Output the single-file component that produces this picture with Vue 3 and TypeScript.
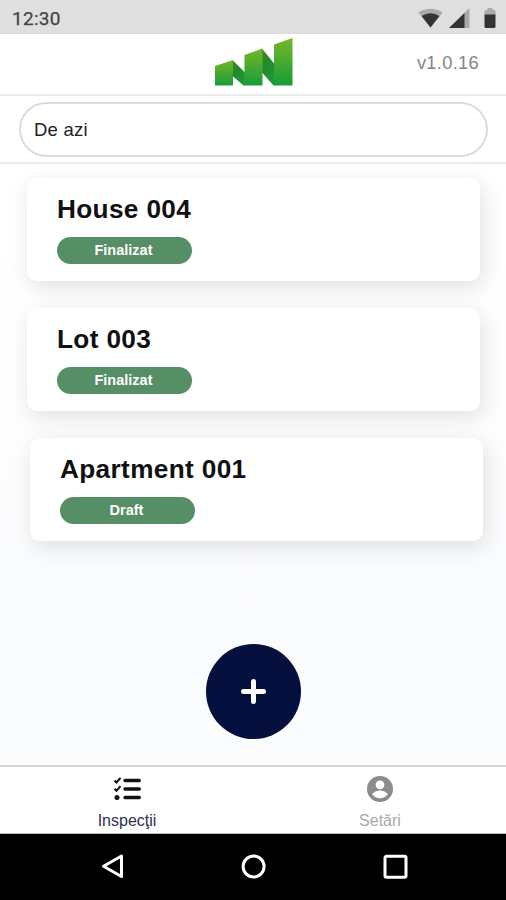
<script setup lang="ts">
interface Inspection {
  title: string
  status: string
  shifted?: boolean
}

const version = 'v1.0.16'
const inspections: Inspection[] = [
  { title: 'House 004', status: 'Finalizat' },
  { title: 'Lot 003', status: 'Finalizat' },
  { title: 'Apartment 001', status: 'Draft', shifted: true },
]
</script>

<template>
  <div class="screen">
    <div class="status-bar">
      <span class="clock">12:30</span>
      <svg class="status-icons" width="80" height="22" viewBox="0 0 80 22">
        <path d="M-0.500 4.500Q11.500 -3 23.500 4.500L11.500 19.500Z" fill="#aaa" />
        <path d="M2.500 8Q11.500 2.500 20.500 8L11.500 19.500Z" fill="#333" />
        <path d="M30 20L50.500 0V20Z" fill="#aaa" />
        <path d="M30 20L45.500 5V20Z" fill="#333" />
        <path d="M65.500 3.500Q65.500 2 67 2H68.500V0H73.500V2H75Q76.500 2 76.500 3.500V7H65.500Z" fill="#aaa" />
        <path d="M65.500 6.500H76.500V18.500Q76.500 20 75 20H67Q65.500 20 65.500 18.500Z" fill="#333" />
      </svg>
    </div>

    <header class="header">
      <svg class="logo" width="78" height="48" viewBox="0 0 78 48">
        <defs>
          <linearGradient id="face" x1="0" y1="0" x2="0" y2="1">
            <stop offset="0" stop-color="#76b62a" />
            <stop offset="1" stop-color="#179d39" />
          </linearGradient>
          <linearGradient id="fold" x1="0" y1="0" x2="0.700" y2="1">
            <stop offset="0" stop-color="#44861d" />
            <stop offset="0.450" stop-color="#25892b" />
            <stop offset="1" stop-color="#189b38" />
          </linearGradient>
        </defs>
        <path d="M17.500 22L30 34.500V47.500H28.500L17.500 38Z" fill="url(#fold)" />
        <path d="M47 10.500L59.500 26V47.500H58.500L47 34.500Z" fill="url(#fold)" />
        <path d="M0 28L18 22V47.500H0Z" fill="url(#face)" />
        <path d="M29.500 17L47.500 10.500V47.500H29.500Z" fill="url(#face)" />
        <path d="M59 6.500L77.500 0V47.500H59Z" fill="url(#face)" />
      </svg>
      <span class="version">{{ version }}</span>
    </header>

    <div class="filter">
      <div class="filter-box">De azi</div>
    </div>

    <main class="content">
      <article
        v-for="item in inspections"
        :key="item.title"
        class="card"
        :class="{ shifted: item.shifted }"
      >
        <h2>{{ item.title }}</h2>
        <span class="badge">{{ item.status }}</span>
      </article>
      <button class="add" type="button" aria-label="+">
        <svg width="26" height="26" viewBox="0 0 26 26">
          <path d="M12.500 2.500V22.500M2.500 12.500H22.500" stroke="#fff" stroke-width="5" stroke-linecap="round" />
        </svg>
      </button>
    </main>

    <nav class="tabs">
      <div class="tab active">
        <svg width="28" height="26" viewBox="0 0 28 26">
          <g fill="none" stroke="#101014">
            <path d="M1.500 4.500L3.500 6.500L7.500 1.800M1.500 12.800L3.500 14.800L7.500 10.100" stroke-width="2" />
            <path d="M12 4.500H26.300M12 13H26.300M12 21.500H26.300" stroke-width="3.300" stroke-linecap="round" />
          </g>
          <circle cx="4" cy="21.500" r="2.500" fill="#101014" />
        </svg>
        <span>Inspecţii</span>
      </div>
      <div class="tab">
        <svg width="28" height="26" viewBox="0 0 28 26">
          <circle cx="14" cy="13" r="13" fill="#8c8c8c" />
          <circle cx="14" cy="8.800" r="4.400" fill="#fff" />
          <path d="M6.200 18.300C8 15.400 12 14.600 14 14.600S20 15.400 21.800 18.300C20 21 17 22.300 14 22.300S8 21 6.200 18.300Z" fill="#fff" />
        </svg>
        <span>Setări</span>
      </div>
    </nav>

    <div class="system-nav">
      <svg width="24" height="28" viewBox="0 0 24 28">
        <path d="M20.500 3V23.500L2.500 13.200Z" />
      </svg>
      <svg width="26" height="28" viewBox="0 0 26 28">
        <circle cx="12.600" cy="13.500" r="10.500" />
      </svg>
      <svg width="26" height="28" viewBox="0 0 26 28">
        <rect x="3" y="3.300" width="21" height="21" rx="1.500" />
      </svg>
    </div>
  </div>
</template>

<style>
body {
  margin: 0;
}
</style>

<style scoped>
.screen {
  display: flex;
  flex-direction: column;
  box-sizing: border-box;
  width: 506px;
  height: 900px;
  overflow: hidden;
  background: #fff;
  font-family: "Liberation Sans", Arial, sans-serif;
}

.status-bar {
  display: flex;
  flex: none;
  align-items: center;
  justify-content: space-between;
  box-sizing: border-box;
  height: 34px;
  padding: 3px 7px 0 12px;
  background: #dfdfdf;
}

.clock {
  padding-top: 1px;
  color: #444;
  font: 400 19px/24px Roboto, sans-serif;
  letter-spacing: 0.300px;
  -webkit-text-stroke: 0.250px #444;
}

.status-icons {
  margin-top: 1px;
  overflow: visible;
}

.header {
  display: grid;
  flex: none;
  grid-template-columns: 1fr 78px 1fr;
  box-sizing: border-box;
  height: 62px;
  padding: 4px 27px 0 28px;
  border-bottom: 2px solid #ececec;
}

.logo {
  grid-column: 2;
}

.version {
  justify-self: end;
  padding-top: 14px;
  color: #858585;
  font-size: 18.300px;
  letter-spacing: 0.300px;
  line-height: 22px;
}

.filter {
  flex: none;
  box-sizing: border-box;
  height: 68px;
  padding: 6px 18px 0 19px;
  border-bottom: 2px solid #ececec;
}

.filter-box {
  box-sizing: border-box;
  height: 55px;
  padding-left: 13px;
  border: 2px solid #dcdcdc;
  border-radius: 28px;
  color: #222;
  font-size: 18.500px;
  letter-spacing: 0.250px;
  line-height: 51px;
}

.content {
  display: flex;
  flex: 1;
  flex-direction: column;
  gap: 27px;
  min-height: 0;
  padding: 14px 26px 0 27px;
  overflow: hidden;
  background: linear-gradient(#fff 0%, #fefefe 35%, #fafbfd 75%, #fafcfe 100%);
}

.card {
  flex: none;
  box-sizing: border-box;
  height: 103px;
  padding: 15px 30px 0;
  border-radius: 10px;
  background: #fff;
  box-shadow: 3px 6px 22px rgba(0, 0, 0, 0.12);
}

.card.shifted {
  margin: 0 -3px 0 3px;
}

.card h2 {
  margin: 0;
  color: #111;
  font-size: 26.200px;
  font-weight: 700;
  letter-spacing: 0.350px;
  line-height: 32px;
}

.badge {
  display: block;
  box-sizing: border-box;
  width: 135px;
  height: 27px;
  margin-top: 12px;
  padding-right: 2px;
  border-radius: 14px;
  background: #568f66;
  color: #fff;
  font-size: 14.500px;
  font-weight: 700;
  line-height: 27px;
  text-align: center;
}

.add {
  display: flex;
  flex: none;
  align-items: center;
  align-self: center;
  justify-content: center;
  width: 95px;
  height: 95px;
  margin-top: 76px;
  padding: 0;
  border: 0;
  border-radius: 50%;
  background: #05103f;
}

.tabs {
  display: grid;
  flex: none;
  grid-template-columns: 1fr 1fr;
  box-sizing: border-box;
  height: 69px;
  border-top: 2px solid #d2d4d6;
  border-bottom: 1px solid #bbb;
  background: #fff;
}

.tab {
  display: flex;
  flex-direction: column;
  align-items: center;
  gap: 9px;
  padding: 9px 0 0 1px;
  color: #a8a8a8;
  font-size: 16px;
  line-height: 20px;
}

.tab.active {
  color: #30304f;
}

.system-nav {
  display: flex;
  flex: none;
  align-items: center;
  justify-content: space-between;
  box-sizing: border-box;
  height: 66px;
  padding: 0 98px 0 101px;
  background: #000;
}

.system-nav svg {
  fill: none;
  stroke: #fff;
  stroke-width: 3;
  stroke-linejoin: round;
}
</style>
